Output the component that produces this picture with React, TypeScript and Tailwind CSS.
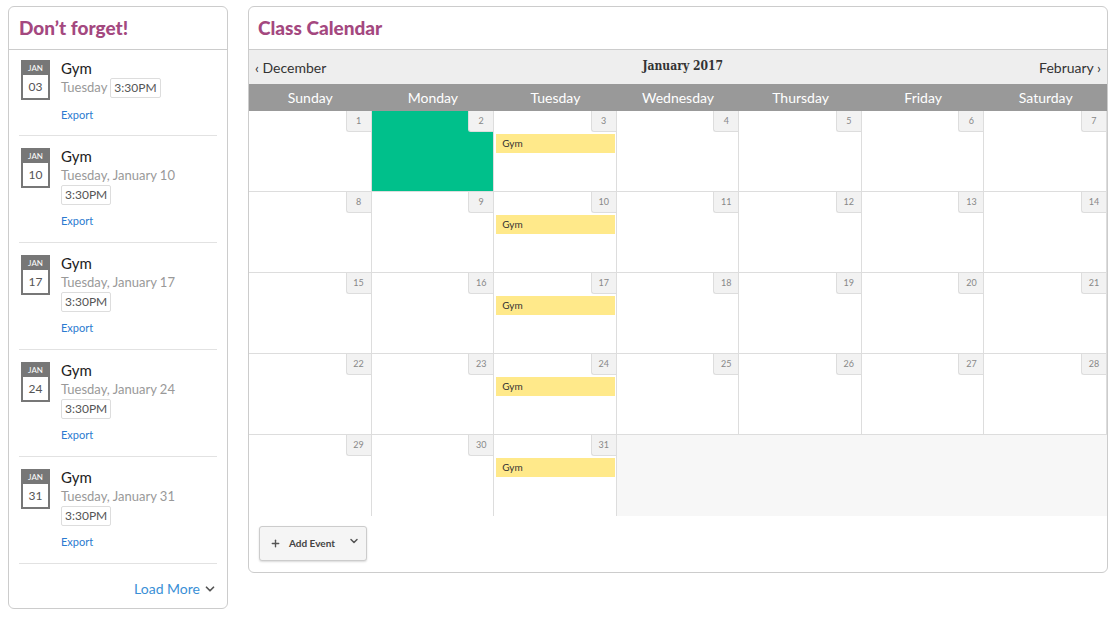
import { Fragment } from 'react'
import { Plus, ChevronDown } from 'lucide-react'

const items = [
  { day: '03', date: 'Tuesday', inline: true },
  { day: '10', date: 'Tuesday, January 10' },
  { day: '17', date: 'Tuesday, January 17' },
  { day: '24', date: 'Tuesday, January 24' },
  { day: '31', date: 'Tuesday, January 31' },
]

const weekdays = ['Sunday', 'Monday', 'Tuesday', 'Wednesday', 'Thursday', 'Friday', 'Saturday']

const weeks = [
  [1, 2, 3, 4, 5, 6, 7],
  [8, 9, 10, 11, 12, 13, 14],
  [15, 16, 17, 18, 19, 20, 21],
  [22, 23, 24, 25, 26, 27, 28],
  [29, 30, 31],
]

const gymDays = [3, 10, 17, 24, 31]

function DateBadge({ day }: { day: string }) {
  return (
    <div className="ml-[2px] flex h-[40px] w-[29px] shrink-0 flex-col items-center bg-[#777] px-[2px] pb-[2px]">
      <div className="flex h-[15px] items-center text-[8px] leading-none text-white">JAN</div>
      <div className="flex w-full flex-1 items-center justify-center bg-white text-[12px] leading-none text-[#555]">
        {day}
      </div>
    </div>
  )
}

function TimeBox() {
  return (
    <span className="inline-flex h-[20px] items-center rounded-[2px] border border-[#ddd] px-[3px] text-[12px] text-[#555]">
      3:30PM
    </span>
  )
}

function Reminder({ day, date, inline }: { day: string; date: string; inline?: boolean }) {
  return (
    <div className={`flex gap-[11px] border-b border-[#e2e2e2] ${inline ? 'pb-[13px] pt-[10px]' : 'pb-[14px] pt-[12px]'}`}>
      <DateBadge day={day} />
      <div className="flex flex-col">
        <div className="text-[15px] leading-[16px] text-[#222]">Gym</div>
        {inline ? (
          <div className="mt-[2px] flex items-center gap-[3px]">
            <span className="text-[13px] text-[#999]">{date}</span>
            <TimeBox />
          </div>
        ) : (
          <>
            <div className="mt-[2px] text-[13px] leading-[18px] text-[#999]">{date}</div>
            <div className="mt-[1px] flex">
              <TimeBox />
            </div>
          </>
        )}
        <a className={`${inline ? 'mt-[10px]' : 'mt-[9px]'} text-[11px] leading-[14px] text-[#2b7bd0]`}>Export</a>
      </div>
    </div>
  )
}

function DayCell({ n, last }: { n: number; last: boolean }) {
  const green = n === 2
  return (
    <div
      className={`relative h-[81px] border-r border-[#ddd] ${last ? '' : 'border-b'} ${green ? 'bg-[#00c08b]' : 'bg-white'}`}
    >
      <div className="flex justify-end">
        <div className="flex h-[21px] w-[25px] items-center justify-center rounded-bl-[3px] border-b border-l border-[#ddd] bg-[#f2f2f2] text-[9px] text-[#888]">
          {n}
        </div>
      </div>
      {gymDays.includes(n) && (
        <div className="ml-[2px] mr-[1px] mt-[2px] flex h-[19px] items-center bg-[#ffe98a] px-[6px] text-[10px] text-[#333]">
          Gym
        </div>
      )}
    </div>
  )
}

export default function App() {
  return (
    <div className="flex min-h-[618px] gap-[20px] bg-white pl-[8px] pt-[6px] font-['Lato',sans-serif]">
      <div className="flex h-[603px] w-[220px] flex-col rounded-[6px] border border-[#ccc]">
        <h2 className="flex h-[43px] shrink-0 items-center border-b border-[#ccc] px-[10px] text-[19px] font-black text-[#a4487f]">
          Don’t forget!
        </h2>
        <div className="px-[10px]">
          {items.map((it) => (
            <Reminder key={it.day} {...it} />
          ))}
        </div>
        <div className="mt-[16px] flex items-center justify-end gap-[3px] px-[10px] text-[14px] leading-[17px] text-[#3a8fd6]">
          Load More
          <ChevronDown size={14} strokeWidth={3} className="text-[#555]" />
        </div>
      </div>

      <div className="flex h-[567px] w-[860px] flex-col rounded-[6px] border border-[#ccc]">
        <h2 className="flex h-[43px] shrink-0 items-center border-b border-[#ccc] px-[9px] text-[19px] font-black text-[#a4487f]">
          Class Calendar
        </h2>
        <div className="flex h-[34px] shrink-0 items-center justify-between bg-[#eee] px-[6px] text-[14px] text-[#333]">
          <span>‹ December</span>
          <span className="-mt-[3px] font-['DejaVu_Serif_Condensed','DejaVu_Serif',serif] text-[12px] font-bold text-[#333]">
            January 2017
          </span>
          <span>February ›</span>
        </div>
        <div className="grid h-[27px] shrink-0 grid-cols-7 items-center bg-[#999] text-center text-[14px] text-white">
          {weekdays.map((d) => (
            <div key={d}>{d}</div>
          ))}
        </div>
        <div className="grid grid-cols-7">
          {weeks.map((w, wi) => (
            <Fragment key={wi}>
              {w.map((n) => (
                <DayCell key={n} n={n} last={wi === weeks.length - 1} />
              ))}
              {w.length < 7 && <div className="col-span-4 h-[81px] bg-[#f7f7f7]" />}
            </Fragment>
          ))}
        </div>
        <div className="px-[10px] pt-[10px]">
          <button className="flex h-[35px] w-[108px] items-center rounded-[3px] border border-[#ccc] bg-[#f5f5f5] pl-[10px] text-[10px] font-bold text-[#444] shadow-[0_1px_2px_rgba(0,0,0,0.15)]">
            <Plus size={11} strokeWidth={3} className="text-[#555]" />
            <span className="ml-[8px]">Add Event</span>
            <ChevronDown size={12} strokeWidth={3} className="-mt-[6px] ml-[13px] text-[#555]" />
          </button>
        </div>
      </div>
    </div>
  )
}
